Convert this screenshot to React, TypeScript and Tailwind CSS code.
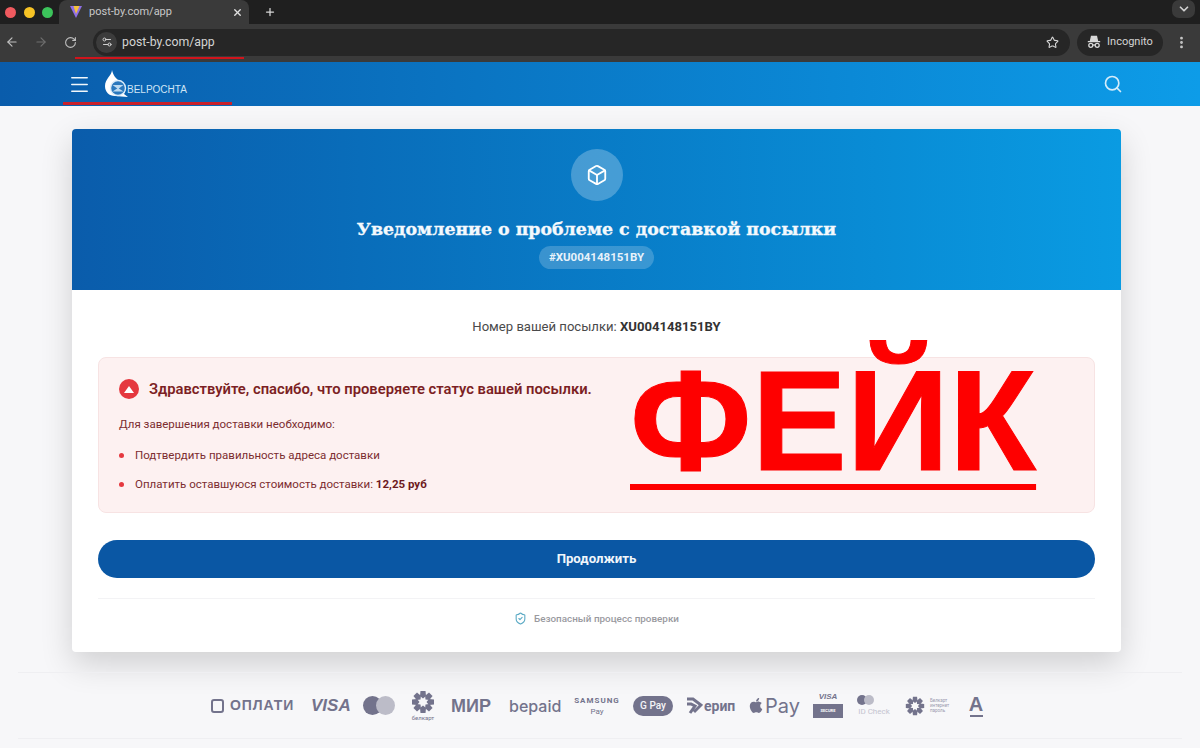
import React from "react";
import {
  ArrowLeft,
  ArrowRight,
  Box,
  ChevronDown,
  EllipsisVertical,
  Menu,
  Plus,
  RotateCw,
  Search,
  Settings2,
  ShieldCheck,
  Star,
  X,
} from "lucide-react";
import { FaApple } from "react-icons/fa";

const sans = "font-['Roboto','Liberation_Sans',sans-serif]";

function Favicon() {
  return (
    <svg width="14" height="14" viewBox="0 0 14 14">
      <path d="M1 1 L7 13 L13 1 Z" fill="#8f6fe8" />
      <path d="M4.5 1 L7 9 L10.5 1 Z" fill="#f5c23a" />
    </svg>
  );
}

function IncognitoIcon() {
  return (
    <svg width="14" height="14" viewBox="0 0 14 14" fill="none" stroke="#d8d8d8" strokeWidth="1.3">
      <path d="M3.5 6 L4.5 1.5 H9.5 L10.5 6 Z" fill="#d8d8d8" />
      <path d="M0.8 6.6 H13.2" />
      <circle cx="3.8" cy="10.3" r="2" />
      <circle cx="10.2" cy="10.3" r="2" />
      <path d="M5.8 10 H8.2" />
    </svg>
  );
}

function BelpochtaLogo() {
  return (
    <svg width="26" height="28" viewBox="0 0 26 28">
      <path
        d="M8 0 C8 5 1 9 1 16 C1 22 5 26 11 26 L24 27 L20 24 C23 20 21 14 16 11 C12 9 9 5 8 0 Z"
        fill="#fff"
      />
      <circle cx="14" cy="18" r="7.5" fill="#2a78bd" stroke="#dcecf8" strokeWidth="1.4" />
      <path d="M8.5 15 L19.5 15 L14 19 Z M8.5 21.5 L14 18 L19.5 21.5 Z" fill="#bcd9ef" />
    </svg>
  );
}

function Belkart({ size, color }: { size: number; color: string }) {
  return (
    <svg width={size} height={size} viewBox="0 0 24 24" fill={color}>
      {[0, 45, 90, 135, 180, 225, 270, 315].map((a) => (
        <path key={a} d="M9.5 1 L14.5 1 L15 6 L12 8.5 L9 6 Z" transform={`rotate(${a} 12 12)`} />
      ))}
    </svg>
  );
}

function PaymentLogos() {
  const c = "text-[#73738c]";
  return (
    <div className={`flex h-[67px] items-center justify-center gap-[13px] border-y border-[#efeff2] pr-[6px] ${c}`}>
      <div className="flex w-[87px] items-center gap-[6px]">
        <div className="h-[14px] w-[13px] rounded-[3px] border-2 border-[#73738c]" />
        <span className="font-['Liberation_Sans',sans-serif] text-[14px] font-bold tracking-[0.9px]">ОПЛАТИ</span>
      </div>
      <span className="w-[39px] font-['Liberation_Sans',sans-serif] text-[17px] font-bold italic leading-none">VISA</span>
      <div className="flex w-[32px]">
        <div className="h-[19px] w-[19px] rounded-full bg-[#73738c]" />
        <div className="-ml-[6px] h-[19px] w-[19px] rounded-full bg-[#bcbcc8]" />
      </div>
      <div className="flex w-[30px] flex-col items-center">
        <Belkart size={24} color="#73738c" />
        <span className="text-[6px] leading-[8px] font-['Roboto',sans-serif]">белкарт</span>
      </div>
      <span className="w-[45px] font-['Liberation_Sans',sans-serif] text-[18px] font-bold leading-none">МИР</span>
      <span className="w-[52px] font-['Inter',sans-serif] text-[16px] font-medium leading-none">bepaid</span>
      <div className="flex w-[46px] flex-col items-center font-['Roboto',sans-serif] text-[8px] font-bold leading-[11px] tracking-[1px]">
        <span>SAMSUNG</span>
        <span className="font-normal tracking-normal">Pay</span>
      </div>
      <div className="flex h-[20px] w-[40px] items-center justify-center rounded-full bg-[#73738c] font-['Roboto',sans-serif] text-[10px] font-medium text-[#f4f4f7]">
        G Pay
      </div>
      <div className="flex w-[50px] items-center gap-[1px]">
        <svg width="17" height="18" viewBox="0 0 17 18" fill="none" stroke="#73738c" strokeWidth="3">
          <path d="M1 2 H7 L15 8 L8 15 M1 7 H5 L9 9 L4 16" />
        </svg>
        <span className="font-['Roboto',sans-serif] text-[14px] font-bold leading-none">ерип</span>
      </div>
      <div className="flex w-[51px] items-center gap-[2px]">
        <FaApple size={17} />
        <span className="font-['Inter',sans-serif] text-[20px] leading-none">Pay</span>
      </div>
      <div className="flex w-[30px] flex-col items-center gap-[3px]">
        <span className="font-['Liberation_Sans',sans-serif] text-[8px] font-bold italic leading-none">VISA</span>
        <div className="flex h-[14px] w-full items-center justify-center bg-[#73738c] text-[4px] font-bold text-white font-['Roboto',sans-serif]">
          SECURE
        </div>
      </div>
      <div className="flex w-[36px] flex-col items-center gap-[3px]">
        <div className="flex self-start pl-[1px]">
          <div className="h-[10px] w-[10px] rounded-full bg-[#73738c]" />
          <div className="-ml-[3px] h-[10px] w-[10px] rounded-full bg-[#bcbcc8]" />
        </div>
        <span className="whitespace-nowrap font-['Roboto',sans-serif] text-[8px] leading-none text-[#c4c4d0]">ID Check</span>
      </div>
      <div className="flex w-[51px] items-center gap-[5px]">
        <Belkart size={20} color="#73738c" />
        <div className="flex flex-col font-['Roboto',sans-serif] text-[4.5px] leading-[5px] text-[#9a9aae]">
          <span>Белкарт</span>
          <span>интернет</span>
          <span>пароль</span>
        </div>
      </div>
      <div className="flex w-[14px] flex-col items-center">
        <span className="font-['Liberation_Sans',sans-serif] text-[20px] font-bold leading-[18px]">А</span>
        <div className="mt-[2px] h-[2px] w-[13px] bg-[#73738c]" />
      </div>
    </div>
  );
}

export default function App() {
  return (
    <div className={`relative h-[748px] w-[1200px] overflow-hidden bg-[#f7f7f9] ${sans}`}>
      {/* Browser tab strip */}
      <div className="relative flex h-[24px] items-center bg-[#1f1f1f]">
        <div className="flex gap-[7.5px] pl-[5px]">
          <div className="h-[11px] w-[11px] rounded-full bg-[#f05a5f]" />
          <div className="h-[11px] w-[11px] rounded-full bg-[#f7c325]" />
          <div className="h-[11px] w-[11px] rounded-full bg-[#3cc45b]" />
        </div>
        <div className="ml-[6px] flex h-[24px] w-[190px] items-center rounded-t-[8px] bg-[#3a3a3a] pl-[10px] pr-[3px]">
          <Favicon />
          <span className="ml-[6px] text-[11px] text-[#c8c8c8]">post-by.com/app</span>
          <X className="ml-auto mr-[3px] text-[#e0e0e0]" size={11} strokeWidth={3} />
        </div>
        <Plus className="ml-[15px] text-[#d8d8d8]" size={12} strokeWidth={2.5} />
        <div className="ml-auto mr-[5px] flex h-[18px] w-[23px] -translate-y-[3px] items-center justify-center rounded-[7px] bg-[#3a3a3a]">
          <ChevronDown size={14} strokeWidth={3} className="text-[#d0d0d0]" />
        </div>
      </div>

      {/* Browser toolbar */}
      <div className="flex h-[38px] items-center bg-[#3a3a3a] pb-[2px]">
        <ArrowLeft className="ml-[5px] text-[#c0c0c0]" size={14} />
        <ArrowRight className="ml-[15px] text-[#6f6f6f]" size={14} />
        <RotateCw className="ml-[16px] text-[#c0c0c0]" size={13} />
        <div className="ml-[16px] flex h-[27px] w-[977px] items-center rounded-full bg-[#262626] pl-[3px] pr-[6px]">
          <div className="flex h-[21px] w-[21px] items-center justify-center rounded-full bg-[#3c3c3c]">
            <Settings2 size={12} className="text-[#d0d0d0]" />
          </div>
          <span className="ml-[5px] text-[12.3px] text-[#d4d4d4]">post-by.com/app</span>
          <Star className="ml-auto mr-[5px] text-[#d8d8d8]" size={13} />
        </div>
        <div className="ml-[7px] flex h-[27px] w-[86px] items-center justify-center gap-[6px] rounded-full bg-[#262626]">
          <IncognitoIcon />
          <span className="text-[11px] text-[#d4d4d4]">Incognito</span>
        </div>
        <EllipsisVertical className="ml-[11px] text-[#c8c8c8]" size={15} strokeWidth={2.5} />
      </div>

      {/* Site header */}
      <header className="flex h-[44px] items-center bg-linear-to-r from-[#0a5cab] to-[#0d9ce8] pl-[68px] pr-[77px]">
        <Menu className="text-[#f2f7fb]" size={23} strokeWidth={1.7} />
        <div className="ml-[13px] flex items-end">
          <BelpochtaLogo />
          <span className="-ml-[3px] mb-[1px] font-['Liberation_Sans',sans-serif] text-[10px] leading-[14px] text-[#cfe4f5]">
            BELPOCHTA
          </span>
        </div>
        <Search className="ml-auto text-[#d4ecfa]" size={20} />
      </header>

      {/* Red annotation lines */}
      <div className="absolute left-[75px] top-[57px] h-[2px] w-[169px] bg-[#d0141c]" />
      <div className="absolute left-[63px] top-[102px] h-[3px] w-[169px] bg-[#c9202a]" />

      <main className="px-[72px] pt-[23px] pr-[79px]">
        <section className="overflow-hidden rounded-[4px] bg-white shadow-[0_12px_32px_rgba(0,0,0,0.16)]">
          <div className="flex h-[161px] flex-col items-center bg-linear-to-r from-[#0a5cab] to-[#0a9be2] pt-[20px]">
            <div className="flex h-[52px] w-[52px] items-center justify-center rounded-full bg-white/25">
              <Box className="text-white" size={22} strokeWidth={2} />
            </div>
            <h1 className="mt-[16px] font-['DejaVu_Serif',serif] text-[17.35px] font-bold leading-[24px] text-[#f4f9fd] [-webkit-text-stroke:0.35px_#f4f9fd]">
              Уведомление о проблеме с доставкой посылки
            </h1>
            <div className="mt-[5px] flex h-[23px] w-[115px] items-center justify-center rounded-full bg-white/20 text-[11.5px] font-bold text-[#e8f2fa]">
              #XU004148151BY
            </div>
          </div>

          <div className="px-[26px]">
            <p className="mt-[28px] text-center text-[13.1px] leading-[18px] text-[#4a4a4a]">
              Номер вашей посылки: <b className="font-bold text-[#333]">XU004148151BY</b>
            </p>

            {/* Warning block */}
            <div className="relative mt-[21px] h-[156px] rounded-[8px] border border-[#f7e3e3] bg-[#fdf1f1] px-[20px] pt-[21px]">
              <div className="flex items-center gap-[10px]">
                <div className="flex h-[20px] w-[20px] items-center justify-center rounded-full bg-[#e5383f]">
                  <div className="h-0 w-0 border-x-[5px] border-b-[7px] border-x-transparent border-b-white" />
                </div>
                <h2 className="text-[14.77px] font-semibold leading-[20px] text-[#7c1f24]">
                  Здравствуйте, спасибо, что проверяете статус вашей посылки.
                </h2>
              </div>
              <p className="mt-[17px] text-[11.5px] leading-[16px] text-[#7c2d30]">Для завершения доставки необходимо:</p>
              <ul className="mt-[15px] flex flex-col gap-[13px] text-[11.5px] leading-[16px] text-[#7c2d30]">
                <li className="flex items-center gap-[11px]">
                  <span className="h-[5px] w-[5px] rounded-full bg-[#e5383f]" />
                  Подтвердить правильность адреса доставки
                </li>
                <li className="flex items-center gap-[11px]">
                  <span className="h-[5px] w-[5px] rounded-full bg-[#e5383f]" />
                  <span>
                    Оплатить оставшуюся стоимость доставки: <b className="font-bold text-[#6e1a1e]">12,25 руб</b>
                  </span>
                </li>
              </ul>

              {/* Overlay stamp */}
              <div className="absolute left-[531px] top-[-19px] font-['Liberation_Sans',sans-serif] text-[142.5px] font-bold leading-[164px] text-[#fe0000] underline decoration-[6px] underline-offset-[14px] [-webkit-text-stroke:1px_#fe0000]">
                ФЕЙК
              </div>
            </div>

            <button className="mt-[27px] block h-[38px] w-full rounded-full bg-[#0a57a4] text-[13.2px] font-bold text-[#f0f6fb]">
              Продолжить
            </button>

            <div className="mt-[20px] flex h-[54px] items-start justify-center gap-[7px] border-t border-[#f3f3f5] pt-[13px]">
              <ShieldCheck className="text-[#5aa9c4]" size={13} />
              <span className="text-[9.9px] font-medium leading-[14px] text-[#9a9a9f]">Безопасный процесс проверки</span>
            </div>
          </div>
        </section>

        <div className="-mx-[72px] -mr-[79px] mt-[20px] px-[18px]">
          <PaymentLogos />
        </div>
      </main>
    </div>
  );
}
